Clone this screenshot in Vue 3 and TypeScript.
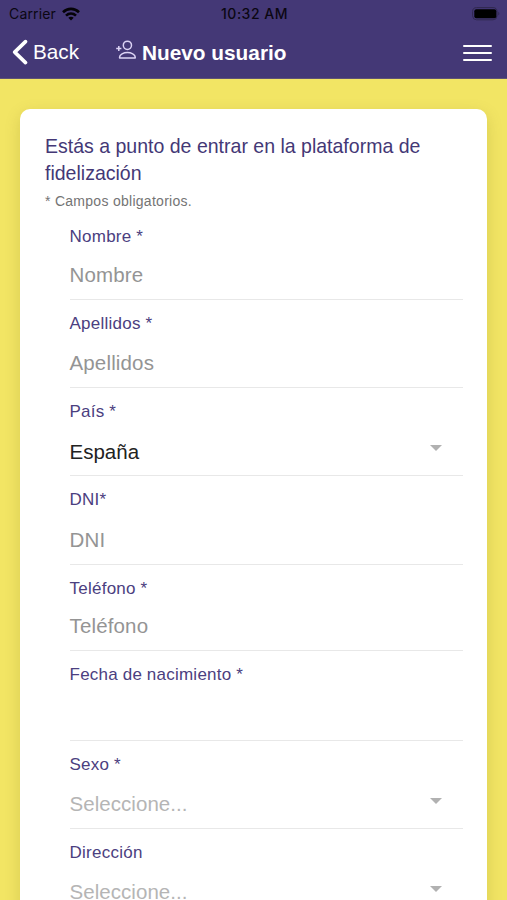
<script setup lang="ts">
interface Field {
  label: string
  value?: string
  kind: 'hint' | 'filled' | 'choose'
  select?: boolean
  height: number
}

const fields: Field[] = [
  { label: 'Nombre *', value: 'Nombre', kind: 'hint', height: 87 },
  { label: 'Apellidos *', value: 'Apellidos', kind: 'hint', height: 88 },
  { label: 'País *', value: 'España', kind: 'filled', select: true, height: 88.5 },
  { label: 'DNI*', value: 'DNI', kind: 'hint', height: 88.5 },
  { label: 'Teléfono *', value: 'Teléfono', kind: 'hint', height: 86 },
  { label: 'Fecha de nacimiento *', kind: 'hint', height: 90 },
  { label: 'Sexo *', value: 'Seleccione...', kind: 'choose', select: true, height: 88 },
  { label: 'Dirección', value: 'Seleccione...', kind: 'choose', select: true, height: 88 },
]
</script>

<template>
  <div class="screen">
    <header class="header">
      <div class="status">
        <div class="carrier">
          <span class="carrier-name">Carrier</span>
          <svg class="wifi" width="18" height="14" viewBox="0 0 18 14" fill="none" stroke="#050308" stroke-width="2.6">
            <path d="M1 5.2C5.6.8 12.4.8 17 5.2" />
            <path d="M4 8.6c2.9-2.7 7.1-2.7 10 0" />
            <path d="M6.3 10.8c1.5-1.4 3.9-1.4 5.4 0L9 13.6z" fill="#050308" stroke="none" />
          </svg>
        </div>
        <span class="time">10:32 AM</span>
        <svg class="battery" width="28" height="14" viewBox="0 0 28 14">
          <rect x=".6" y=".6" width="24.4" height="12.2" rx="4" fill="none" stroke="#30284f" />
          <rect x="2.3" y="2.2" width="22" height="9" rx="2" fill="#000" />
          <path d="M26.3 4.8c1.4.6 1.4 3.2 0 3.8z" fill="#30284f" />
        </svg>
      </div>
      <nav class="nav">
        <button class="back" type="button">
          <svg width="16" height="26" viewBox="0 0 16 26" fill="none" stroke="#fff" stroke-width="3.6" stroke-linecap="round" stroke-linejoin="round">
            <path d="M13.5 2.6 2.7 13.1l10.8 10.5" />
          </svg>
          <span class="back-text">Back</span>
        </button>
        <h1 class="title">
          <svg class="person" width="20" height="20" viewBox="0 0 20 20" fill="none" stroke="#dcd3f5" stroke-width="1.5">
            <circle cx="11.4" cy="5.3" r="4.1" />
            <path d="M3.6 18.1v-1.2c0-2.4 4-4.3 7.8-4.3s7.8 1.9 7.8 4.3v1.2z" stroke-linejoin="round" />
            <path d="M.2 8.5h5.2M2.8 5.9v5.2" />
          </svg>
          <span class="title-text">Nuevo usuario</span>
        </h1>
        <button class="menu" type="button" aria-label="Menú">
          <i /><i /><i />
        </button>
      </nav>
    </header>
    <main class="content">
      <form class="card">
        <h2 class="intro">Estás a punto de entrar en la plataforma de fidelización</h2>
        <p class="note"><span>* Campos obligatorios.</span></p>
        <div class="fields">
          <div v-for="f in fields" :key="f.label" class="field" :style="{ height: f.height + 'px' }">
            <label class="label"><span>{{ f.label }}</span></label>
            <div class="control" :class="f.kind">
              <span class="value">{{ f.value }}</span>
              <svg v-if="f.select" class="arrow" width="12" height="6" viewBox="0 0 12 6"><path d="M0 0h12L6 6z" fill="#b1b1b1" /></svg>
            </div>
          </div>
        </div>
      </form>
    </main>
  </div>
</template>

<style>
body {
  margin: 0;
  overflow: hidden;
}
</style>

<style scoped>
.screen {
  height: 900px;
  overflow: hidden;
  display: flex;
  flex-direction: column;
  background: #f2e564;
  font-family: "Liberation Sans", Arial, sans-serif;
}
.header {
  flex: none;
  height: 79px;
  box-sizing: border-box;
  background: #443876;
  border-bottom: 1px solid #5f5374;
}
.status {
  display: grid;
  grid-template-columns: 1fr auto 1fr;
  align-items: center;
  height: 27px;
  padding: 0 7px 0 9px;
  font: 14px/18px Inter, sans-serif;
  color: #0b0712;
}
.carrier {
  display: flex;
  align-items: center;
  gap: 6px;
}
.carrier-name {
  letter-spacing: 0.15px;
}
.time {
  font-weight: 500;
  letter-spacing: 0.5px;
}
.battery {
  justify-self: end;
}
.nav {
  display: flex;
  align-items: center;
  height: 51px;
  padding: 0 15px 0 12px;
  color: #fff;
}
button {
  border: 0;
  padding: 0;
  background: none;
  color: inherit;
  font: inherit;
}
.back {
  display: flex;
  align-items: center;
  gap: 5px;
  width: 104px;
  margin-top: -2px;
  font-size: 20.7px;
}
.title {
  display: flex;
  align-items: center;
  gap: 6px;
  flex: 1;
  margin: 0;
  font-size: 20.8px;
  line-height: 24px;
}
.person {
  margin-top: -5px;
}
.menu {
  display: flex;
  flex-direction: column;
  gap: 5px;
  margin-top: 1px;
}
.menu i {
  width: 29px;
  height: 2.3px;
  border-radius: 1px;
  background: #fff;
}
.content {
  flex: none;
  padding: 29.5px 20px 0;
}
.card {
  height: 900px;
  box-sizing: border-box;
  padding: 24px 24px 0 25px;
  border-radius: 10px;
  background: #fff;
  box-shadow: 0 5px 16px rgba(100, 90, 0, 0.18);
}
.intro {
  margin: 0;
  font-size: 19.53px;
  font-weight: 400;
  line-height: 27px;
  color: #443876;
}
.note {
  margin: 4px 0 0;
  font-size: 14px;
  letter-spacing: 0.28px;
  line-height: 20px;
  color: #747474;
}
.fields {
  padding-left: 24.5px;
  margin-top: 2px;
}
.field {
  display: flex;
  flex-direction: column;
  justify-content: space-between;
  box-sizing: border-box;
  padding: 14px 0 9.5px;
  border-bottom: 1px solid #e8e8e8;
}
.label {
  font-size: 17px;
  line-height: 20px;
  letter-spacing: 0.25px;
  word-spacing: -0.3px;
  color: #4b4080;
}
.control {
  display: flex;
  align-items: center;
  justify-content: space-between;
  height: 28px;
  padding-right: 21px;
  font-size: 20.5px;
  line-height: 28px;
  letter-spacing: 0.15px;
  color: #949494;
}
.control.filled {
  color: #222;
  letter-spacing: 0;
}
.control.choose {
  color: #b5b5b5;
  letter-spacing: 0.05px;
}
.arrow {
  margin-top: -7px;
}
</style>
